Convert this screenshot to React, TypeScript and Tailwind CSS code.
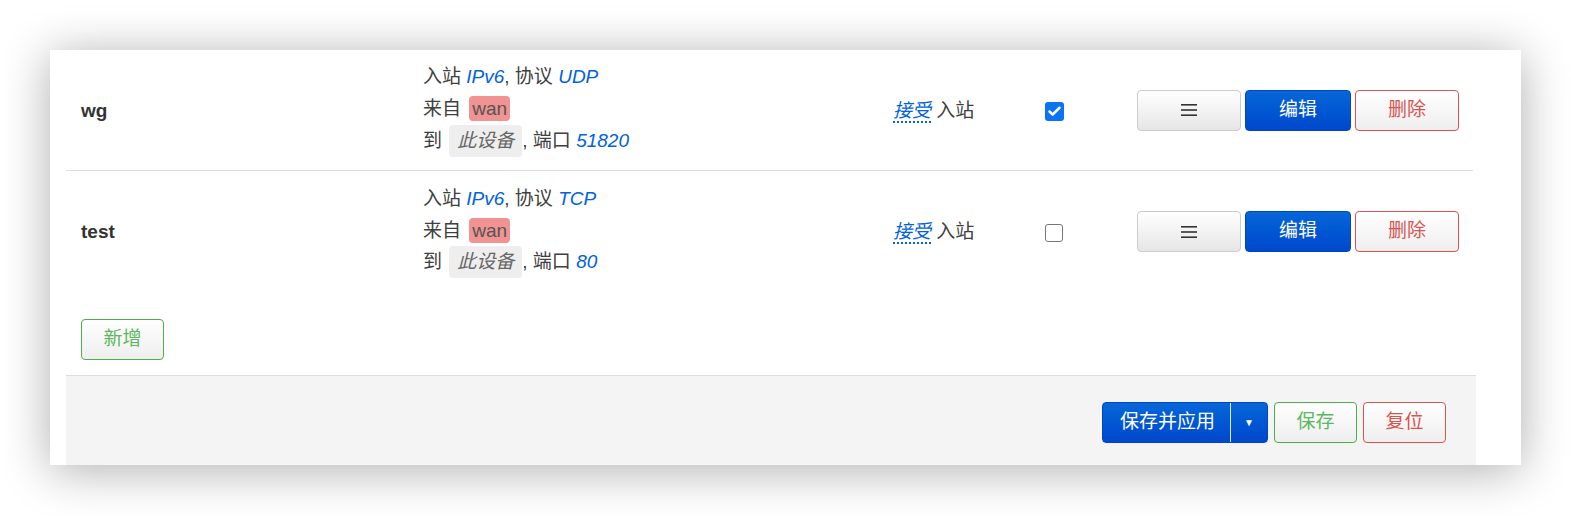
import { Check } from 'lucide-react';

const font = { fontFamily: '"Liberation Sans", "Noto Sans CJK SC", sans-serif' };

type Rule = { name: string; proto: string; port: string; enabled: boolean };

const rules: Rule[] = [
  { name: 'wg', proto: 'UDP', port: '51820', enabled: true },
  { name: 'test', proto: 'TCP', port: '80', enabled: false },
];

const btnBase =
  'h-[41px] rounded-[4px] border text-[19px] flex items-center justify-center';

const MenuIcon = () => (
  <svg width="16" height="12" viewBox="0 0 16 12" className="text-[#333]">
    <rect x="0" y="0" width="16" height="1.6" fill="currentColor" />
    <rect x="0" y="5.2" width="16" height="1.6" fill="currentColor" />
    <rect x="0" y="10.4" width="16" height="1.6" fill="currentColor" />
  </svg>
);

const RuleRow = ({ rule, last }: { rule: Rule; last?: boolean }) => (
  <div
    className={`flex items-center h-[121px] text-[19px] text-[#404040] ${
      last ? '' : 'border-b border-[#dddddd]'
    }`}
  >
    <div className="w-[357px] pl-[15px] pt-[2px] font-bold text-[#333]">{rule.name}</div>
    <div className="w-[470px] pb-[2px] leading-[31.7px]">
      <div>
        入站 <i className="text-[#0062e0]">IPv6</i>, 协议 <i className="text-[#0062e0]">{rule.proto}</i>
      </div>
      <div>
        来自{' '}
        <span className="inline-block ml-[3px] bg-[#f09392] text-[#555] rounded-[4px] px-[3px] leading-[25px]">
          wan
        </span>
      </div>
      <div>
        到{' '}
        <span className="inline-block ml-[2px] bg-[#eeeeee] text-[#666] italic rounded-[4px] px-[8px] leading-[32px]">
          此设备
        </span>
        , 端口 <i className="text-[#0062e0]">{rule.port}</i>
      </div>
    </div>
    <div className="w-[151px] pt-[2px]">
      <i className="text-[#0062e0] border-b-2 border-dotted border-[#0062e0] leading-[20px]">接受</i> 入站
    </div>
    <div className="w-[93px] pl-[1px] pt-[2px] flex items-center">
      {rule.enabled ? (
        <span className="w-[19px] h-[19px] rounded-[3px] bg-[#0b72f5] flex items-center justify-center">
          <Check size={15} strokeWidth={4} color="white" />
        </span>
      ) : (
        <span className="w-[18px] h-[18px] rounded-[3px] border-[1.5px] border-[#767676] bg-white" />
      )}
    </div>
    <div className="flex-1 flex gap-[4px]">
      <button
        className={`${btnBase} w-[104px] border-[#cccccc] bg-gradient-to-b from-white to-[#e6e6e6]`}
      >
        <MenuIcon />
      </button>
      <button
        className={`${btnBase} w-[106px] border-[#0046c0] text-white bg-gradient-to-b from-[#0866d8] to-[#0047cc]`}
      >
        编辑
      </button>
      <button
        className={`${btnBase} w-[104px] border-[#d9534f] text-[#d9534f] bg-gradient-to-b from-white to-[#eeeeee]`}
      >
        删除
      </button>
    </div>
  </div>
);

export default function App() {
  return (
    <div className="min-h-[516px] bg-white pt-[50px] pl-[50px]" style={font}>
      <div className="w-[1471px] bg-white shadow-[0_5px_45px_rgba(0,0,0,0.32)]">
        <div className="pl-[16px] w-[1426px]">
          <div className="w-[1407px]">
            {rules.map((r, i) => (
              <RuleRow key={r.name} rule={r} last={i === rules.length - 1} />
            ))}
          </div>
          <div className="pt-[27px] pb-[15px] pl-[15px]">
            <button
              className={`${btnBase} w-[83px] border-[#4cae4c] text-[#5cb85c] bg-gradient-to-b from-white to-[#eeeeee]`}
            >
              新增
            </button>
          </div>
          <div className="h-[90px] bg-[#f4f4f4] border-t border-[#dddddd] w-[1410px] flex justify-end items-start pt-[26px] pr-[30px] gap-[6px]">
            <div className="flex h-[41px] rounded-[4px] border border-[#0046c0] text-white text-[19px] bg-gradient-to-b from-[#0866d8] to-[#0047cc]">
              <div className="w-[127px] flex items-center justify-center pl-[2px]">保存并应用</div>
              <div className="w-px bg-white/90" />
              <div className="w-[36px] flex items-center justify-center text-[10px]">▼</div>
            </div>
            <button
              className={`${btnBase} w-[83px] border-[#4cae4c] text-[#5cb85c] bg-gradient-to-b from-white to-[#eeeeee]`}
            >
              保存
            </button>
            <button
              className={`${btnBase} w-[83px] border-[#d9534f] text-[#d9534f] bg-gradient-to-b from-white to-[#eeeeee]`}
            >
              复位
            </button>
          </div>
        </div>
      </div>
    </div>
  );
}
